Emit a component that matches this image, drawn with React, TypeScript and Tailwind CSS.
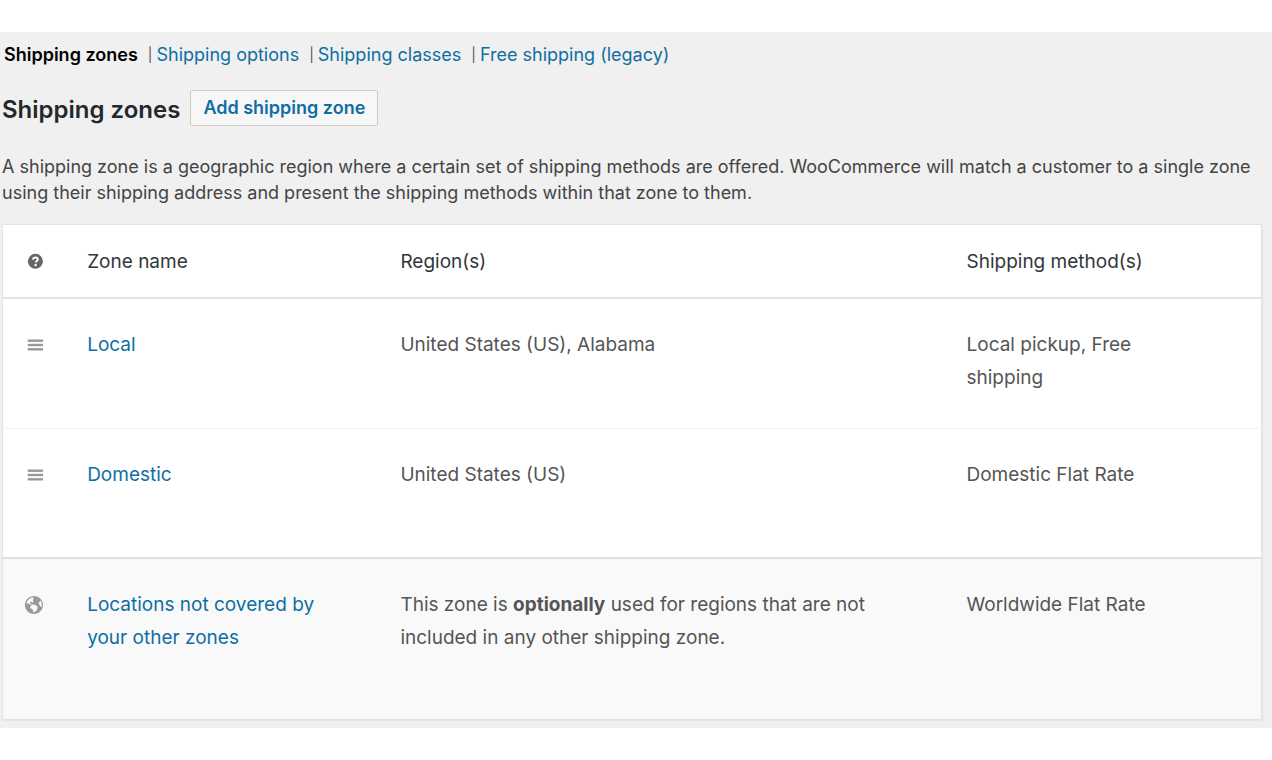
import React from "react";

const linkClass = "text-[#0e6ea3] hover:underline";
const iconCell = "pl-6 pt-[29px] align-top";
const textCell = "pl-5 pr-6 pt-[29px] align-top";

function DragIcon() {
  return (
    <svg width="16" height="12" viewBox="0 0 16 12" fill="#999999" role="img" aria-label="Drag to reorder">
      <rect x="0.700" y="0.500" width="15.300" height="2.400" />
      <rect x="0.700" y="4.800" width="15.300" height="2.400" />
      <rect x="0.700" y="9.100" width="15.300" height="2.400" />
    </svg>
  );
}

function GlobeIcon() {
  return (
    <svg className="-ml-0.5" width="18" height="18" viewBox="0 0 18 18" fill="#999999" aria-hidden="true">
      <path d="M9 0C4.030 0 0 4.030 0 9s4.030 9 9 9 9-4.030 9-9-4.030-9-9-9zm3.460 11.950c0 1.470-.8 3.300-4.060 4.700.3-4.170-2.520-3.690-3.200-5 .126-1.100.804-2.063 1.800-2.550-1.552-.266-3-.96-4.180-2 .05.47.28.904.64 1.210-.782-.295-1.458-.817-1.940-1.500.977-3.225 3.883-5.482 7.250-5.630-.84 1.380-1.500 4.130 0 5.570C7.230 7 6.260 5 5.410 5.790c-1.130 1.060.33 2.510 3.420 3.080 3.290.59 3.660 1.580 3.630 3.080zm1.340-4c-.32-1.110.62-2.230 1.690-3.140 1.356 1.955 1.670 4.450.84 6.680-.77-1.890-2.170-2.320-2.530-3.570z" />
    </svg>
  );
}

function HelpIcon() {
  return (
    <svg width="16" height="16" viewBox="0 0 16 16" role="img" aria-label="Help">
      <circle cx="8.400" cy="8.300" r="7.500" fill="#666666" />
      <path d="M6 6.600c.1-1.500 1-2.100 2.400-2.100s2.400.7 2.400 1.900c0 1.500-2.100 1.500-2.100 3.100" fill="none" stroke="#fff" strokeWidth="1.900" />
      <circle cx="8.600" cy="12" r="1.200" fill="#fff" />
    </svg>
  );
}

const tabs = ["Shipping options", "Shipping classes", "Free shipping (legacy)"];

const zones = [
  { name: "Local", regions: "United States (US), Alabama", methods: "Local pickup, Free shipping", height: "h-[130px]" },
  { name: "Domestic", regions: "United States (US)", methods: "Domestic Flat Rate", height: "h-32" },
];

export default function App() {
  return (
    <div className="bg-white py-8 font-['Inter',sans-serif] text-[#444444]">
      <main className="bg-[#f0f0f0] pb-2">
        <nav className="flex items-center px-1 pt-[9px] text-lg leading-7">
          <a href="#zones" className="font-semibold text-black">Shipping zones</a>
          {tabs.map((tab) => (
            <span key={tab} className="ml-2.5 flex items-center gap-1">
              <span className="text-sm text-[#555555]">|</span>
              <a href="#section" className={linkClass}>{tab}</a>
            </span>
          ))}
        </nav>
        <div className="mt-[21px] flex items-start gap-2.5 pl-0.5">
          <h1 className="pt-1 text-2xl font-semibold text-[#23282d]">Shipping zones</h1>
          <button type="button" className="h-9 rounded-xs border border-[#cccccc] bg-[#f7f7f7] px-3 text-lg font-semibold text-[#0e6ea3]">
            Add shipping zone
          </button>
        </div>
        <p className="mt-7 px-0.5 text-lg leading-[26px]">
          A shipping zone is a geographic region where a certain set of shipping methods are offered. WooCommerce will match a customer to a single zone using their shipping address and present the shipping methods within that zone to them.
        </p>
        <div className="mt-[18px] pr-2.5 pl-0.5">
          <table className="w-full table-fixed border-separate border-spacing-0 border border-[#e3e3e3] bg-white text-left text-[19px] leading-[33px] text-[#555555] shadow-[1px_1px_1px_rgba(0,0,0,0.04)]">
            <colgroup>
              <col className="w-[5.100%]" />
              <col className="w-[24.900%]" />
              <col />
              <col className="w-[25%]" />
            </colgroup>
            <thead className="text-[#32373c]">
              <tr className="h-[74px] *:border-b-2 *:border-[#e3e3e3] *:font-normal">
                <th scope="col" className="pl-6"><HelpIcon /></th>
                <th scope="col" className="pl-5">Zone name</th>
                <th scope="col" className="pl-5">Region(s)</th>
                <th scope="col" className="pl-5">Shipping method(s)</th>
              </tr>
            </thead>
            <tbody>
              {zones.map((zone) => (
                <tr key={zone.name} className={`${zone.height} *:border-b *:border-[#f3f3f3] last:*:border-b-0`}>
                  <td className={iconCell}><div className="flex h-[33px] items-center"><DragIcon /></div></td>
                  <td className={textCell}><a href="#zone" className={linkClass}>{zone.name}</a></td>
                  <td className={textCell}>{zone.regions}</td>
                  <td className="pt-[29px] pr-16 pl-5 align-top">{zone.methods}</td>
                </tr>
              ))}
            </tbody>
            <tfoot>
              <tr className="h-[162px] bg-[#f9f9f9] *:border-t-2 *:border-[#e1e1e1]">
                <td className={iconCell}><div className="flex h-[33px] items-center"><GlobeIcon /></div></td>
                <td className={textCell}><a href="#other" className={linkClass}>Locations not covered by your other zones</a></td>
                <td className={textCell}>
                  This zone is <b className="font-bold">optionally</b> used for regions that are not included in any other shipping zone.
                </td>
                <td className={textCell}>Worldwide Flat Rate</td>
              </tr>
            </tfoot>
          </table>
        </div>
      </main>
    </div>
  );
}
